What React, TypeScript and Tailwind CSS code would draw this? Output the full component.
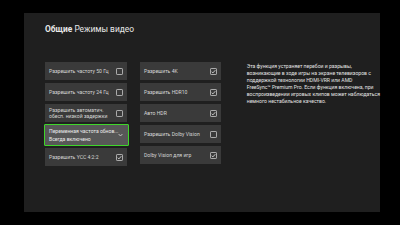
import type { ReactNode } from 'react'

function Box({ checked }: { checked: boolean }) {
  return (
    <svg width="7" height="7" viewBox="0 0 7 7" className="shrink-0">
      <rect x="0.5" y="0.5" width="6" height="6" rx="0.6" fill="none" stroke="#b8b8b8" strokeWidth="0.9" />
      {checked && (
        <path d="M1.7 3.8 L2.9 4.9 L5.3 2.2" fill="none" stroke="#d8d8d8" strokeWidth="0.9" />
      )}
    </svg>
  )
}

function Tile({ children, checked }: { children: ReactNode; checked: boolean }) {
  return (
    <div className="flex h-[18px] items-center justify-between bg-[#3a3a3a] pl-[4px] pr-[4px]">
      <div className="whitespace-nowrap text-[5.1px] leading-[6.5px] text-[#d6d6d6]">{children}</div>
      <Box checked={checked} />
    </div>
  )
}

const left = [
  { label: 'Разрешить частоту 50 Гц', checked: false },
  { label: 'Разрешить частоту 24 Гц', checked: false },
  { label: 'Разрешить автоматич. обесп. низкой задержки', checked: false, two: true },
]

const right = [
  { label: 'Разрешить 4K', checked: true },
  { label: 'Разрешить HDR10', checked: true },
  { label: 'Авто HDR', checked: true },
  { label: 'Разрешить Dolby Vision', checked: false },
  { label: 'Dolby Vision для игр', checked: true },
]

const desc = [
  'Эта функция устраняет перебои и разрывы,',
  'возникающие в ходе игры на экране телевизоров с',
  'поддержкой технологии HDMI-VRR или AMD',
  'FreeSync™ Premium Pro. Если функция включена, при',
  'воспроизведении игровых клипов может наблюдаться',
  'немного нестабильное качество.',
]

export default function App() {
  return (
    <div
      className="h-[225px] w-[400px] overflow-hidden bg-black pl-[24px] pt-[13px]"
      style={{ fontFamily: 'Roboto, "Noto Sans", sans-serif' }}
    >
      <div className="h-[199px] w-[356px] bg-[#1f1f1f] pl-[21px] pt-[10px]">
        <div className="whitespace-nowrap text-[8.4px] leading-[12px] text-[#e8e8e8]">
          <span className="font-bold">Общие</span> Режимы видео
        </div>

        <div className="mt-[27px] flex">
          <div className="flex w-[82px] flex-col gap-[3px]">
            {left.map((t) => (
              <Tile key={t.label} checked={t.checked}>
                {t.two ? (
                  <>
                    Разрешить автоматич.
                    <br />
                    обесп. низкой задержки
                  </>
                ) : (
                  t.label
                )}
              </Tile>
            ))}
            <div className="-my-[1px] -ml-[1px] -mr-[2px] flex h-[22px] items-center justify-between rounded-[1px] border-[1.5px] border-[#3fd62a] bg-[#575757] pl-[4px] pr-[6px]">
              <div className="whitespace-nowrap text-[5.1px] leading-[8px] text-[#ececec]">
                <div>Переменная частота обнов...</div>
                <div>Всегда включено</div>
              </div>
              <svg width="5" height="4" viewBox="0 0 5 4" className="shrink-0">
                <path d="M0.6 1 L2.5 3 L4.4 1" fill="none" stroke="#d8d8d8" strokeWidth="0.8" />
              </svg>
            </div>
            <Tile checked={true}>Разрешить YCC 4:2:2</Tile>
          </div>

          <div className="ml-[13px] flex w-[82px] flex-col gap-[3px]">
            {right.map((t) => (
              <Tile key={t.label} checked={t.checked}>
                {t.label}
              </Tile>
            ))}
          </div>

          <div className="ml-[26px] pt-[1px] text-[5.1px] leading-[7px] text-[#e4e4e4]">
            {desc.map((l) => (
              <div key={l} className="whitespace-nowrap">
                {l}
              </div>
            ))}
          </div>
        </div>
      </div>
    </div>
  )
}
